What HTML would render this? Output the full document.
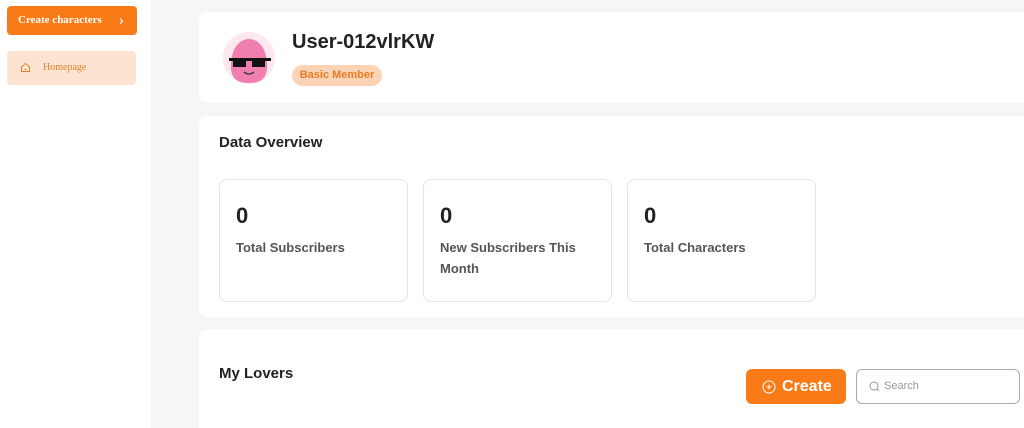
<!DOCTYPE html>
<html><head><style>
*{box-sizing:border-box;margin:0;padding:0}
html,body{width:1024px;height:428px;overflow:hidden}
body{background:#f5f6f7;font-family:"Liberation Sans",sans-serif;position:relative}
.side{position:absolute;left:0;top:0;width:151px;height:428px;background:#fff}
.btn1{position:absolute;left:7px;top:6px;width:130px;height:29px;background:#f97b18;border-radius:4px;color:#fff;font-family:"Liberation Serif",serif;font-weight:bold;font-size:11px;line-height:29px;padding-left:11px}
.btn1 span{position:absolute;right:13px;top:-1px;font-weight:normal;font-size:17px}
.home{position:absolute;left:7px;top:51px;width:129px;height:34px;background:#fde3d2;border-radius:4px;color:#e0822e;font-family:"Liberation Serif",serif;font-size:10px;line-height:34px;padding-left:36px}
.card{position:absolute;background:#fff;border-radius:8px}
.stat{position:absolute;top:179px;width:189px;height:123px;border:1px solid #e4e4e4;border-radius:8px;padding:23px 16px}
.stat b{display:block;font-size:22px;color:#222;margin-bottom:8px}
.stat div{font-size:13px;font-weight:bold;color:#555;line-height:21px}
</style></head><body>
<div class="side">
<div class="btn1">Create characters<span>›</span></div>
<div class="home"><svg style="position:absolute;left:13px;top:11px" width="11" height="11" viewBox="0 0 11 11"><path d="M1.5 5L5.5 1.5 9.5 5V9.5H1.5Z" fill="none" stroke="#e0822e" stroke-width="1"/><path d="M4.5 7.5h2" stroke="#e0822e"/></svg>Homepage</div>
</div>
<div class="card" style="left:199px;top:12px;width:830px;height:91px">
<svg style="position:absolute;left:23px;top:19px" width="56" height="54" viewBox="0 0 56 54"><circle cx="27" cy="27" r="26" fill="#fce8ee"/><path d="M9 38C8 20 16 8 27 8S46 20 45 38C44 48 38 52 27 52S10 48 9 38Z" fill="#ee7fae"/><rect x="7" y="27" width="42" height="3" fill="#111"/><rect x="11" y="29" width="13" height="7" fill="#111"/><rect x="30" y="29" width="13" height="7" fill="#111"/><path d="M22 41q5 4 10 0" stroke="#333" fill="none" stroke-width="1.2"/></svg>
<div style="position:absolute;left:93px;top:19px;font-size:20px;font-weight:bold;color:#222">User-012vlrKW</div>
<div style="position:absolute;left:93px;top:53px;width:90px;height:21px;background:#fcd3b4;border-radius:11px;color:#e87b25;font-size:11px;font-weight:bold;text-align:center;line-height:21px">Basic Member</div>
</div>
<div class="card" style="left:199px;top:116px;width:830px;height:201px">
<div style="position:absolute;left:20px;top:18px;font-size:15px;font-weight:bold;color:#222">Data Overview</div>
</div>
<div class="stat" style="left:219px"><b>0</b><div>Total Subscribers</div></div>
<div class="stat" style="left:423px"><b>0</b><div>New Subscribers This Month</div></div>
<div class="stat" style="left:627px"><b>0</b><div>Total Characters</div></div>
<div class="card" style="left:199px;top:329px;width:830px;height:110px">
<div style="position:absolute;left:20px;top:36px;font-size:15px;font-weight:bold;color:#222">My Lovers</div>
<div style="position:absolute;left:547px;top:40px;width:100px;height:35px;background:#f97b18;border-radius:6px;color:#fff;font-size:16px;font-weight:bold;line-height:35px;padding-left:36px"><svg style="position:absolute;left:16px;top:11px" width="14" height="14" viewBox="0 0 14 14"><circle cx="7" cy="7" r="6" fill="none" stroke="#fff"/><path d="M7 4.5v5M4.5 7h5" stroke="#fff"/></svg>Create</div>
<div style="position:absolute;left:657px;top:40px;width:164px;height:35px;border:1px solid #aaa;border-radius:6px;color:#999;font-size:11px;line-height:33px;padding-left:27px"><svg style="position:absolute;left:12px;top:11px" width="11" height="11" viewBox="0 0 11 11"><circle cx="5" cy="5" r="4" fill="none" stroke="#999"/><path d="M8 8l2 2" stroke="#999"/></svg>Search</div>
</div>
</body></html>
